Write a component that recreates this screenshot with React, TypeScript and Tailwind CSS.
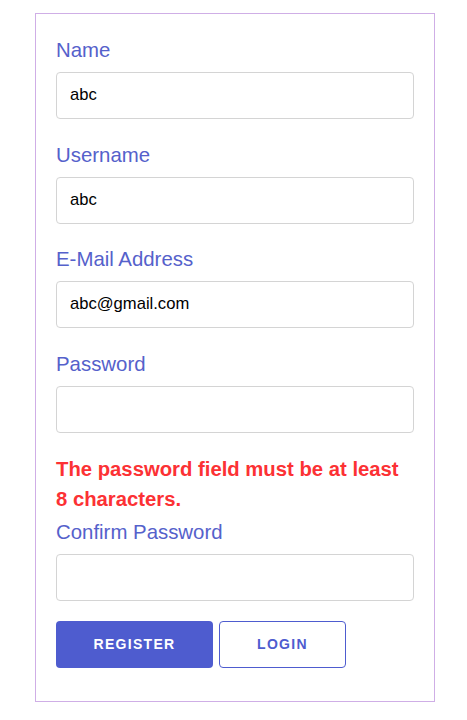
import React from "react";

function Field({ label, value }: { label: string; value?: string }) {
  return (
    <div className="flex flex-col">
      <label className="text-[20.4px] leading-[28px] text-[#5561cb]">{label}</label>
      <div className="mt-[8px] h-[47px] rounded-[4px] border border-[#d4d4d4] px-[13px] flex items-center text-[16.6px] text-black">
        {value}
      </div>
    </div>
  );
}

export default function App() {
  return (
    <div className="bg-white min-h-[720px] pt-[13px]" style={{ fontFamily: '"Liberation Sans", Arial, sans-serif' }}>
      <div className="ml-[35px] w-[400px] border border-[#cfaee6] px-[20px] pt-[22px] pb-[33px]">
        <div className="flex flex-col gap-[21.5px]">
          <Field label="Name" value="abc" />
          <Field label="Username" value="abc" />
          <Field label="E-Mail Address" value="abc@gmail.com" />
          <Field label="Password" />
        </div>
        <p className="mt-[21px] text-[20.3px] leading-[30px] font-bold text-[#fc3134]">
          The password field must be at least 8 characters.
        </p>
        <div className="mt-[4px]">
          <Field label="Confirm Password" />
        </div>
        <div className="mt-[20px] flex gap-[6px]">
          <button className="h-[47px] w-[157px] rounded-[4px] bg-[#4e5ccf] text-white text-[14px] font-bold tracking-[1.3px] uppercase">
            Register
          </button>
          <button className="h-[47px] w-[127px] rounded-[4px] border border-[#4e5ccf] bg-white text-[#4e5ccf] text-[14px] font-bold tracking-[1.3px] uppercase">
            Login
          </button>
        </div>
      </div>
    </div>
  );
}
